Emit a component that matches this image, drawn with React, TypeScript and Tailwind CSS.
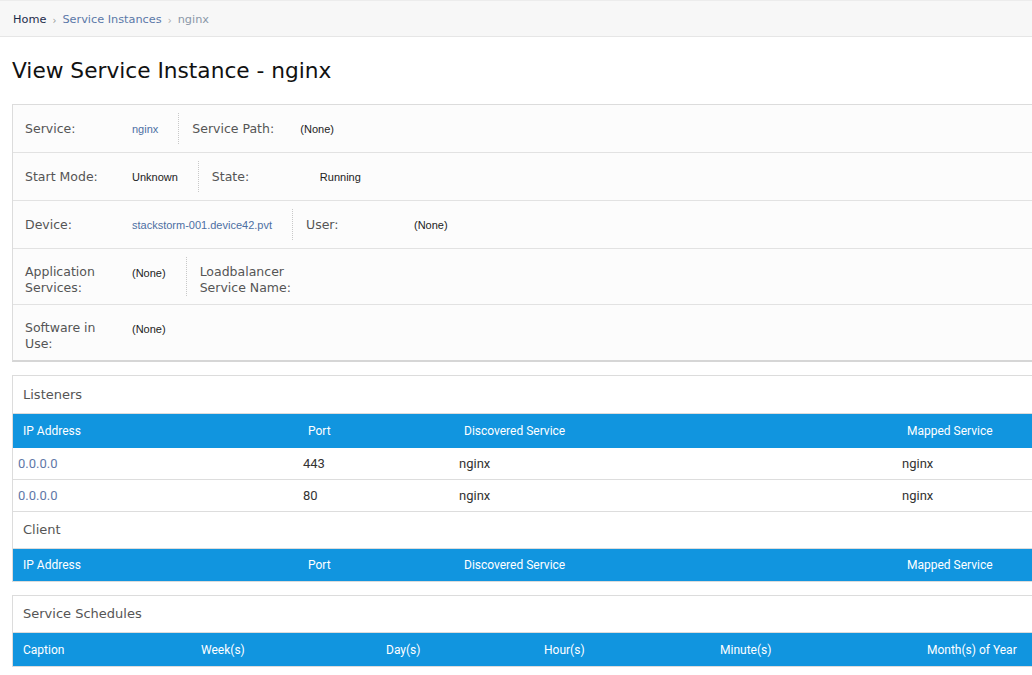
import React from 'react';

const labelFont = { fontFamily: '"DejaVu Sans", Verdana, sans-serif' };

type Field = { label: string; value?: string; link?: boolean };

function DetailRow({ fields, last }: { fields: Field[]; last?: boolean }) {
  return (
    <div
      className={`flex items-stretch px-3 py-2 ${last ? '' : 'border-b border-[#e2e2e2]'}`}
    >
      {fields.map((f, i) => (
        <div key={f.label} className="flex min-h-[31px]">
          <div
            className={`text-[12.5px] leading-4 text-[#555] ${
              f.label.includes('<br/>') ? 'pt-[7px]' : 'pt-[8px]'
            } ${i === 0 ? 'w-[107px]' : 'w-[121px] pl-[13px]'}`}
            style={labelFont}
            dangerouslySetInnerHTML={{ __html: f.label }}
          />
          <div
            className={`text-[11px] leading-4 pt-[8px] ${
              f.link ? 'text-[#4d6fa3]' : 'text-[#222]'
            } ${
              i === 0 && fields.length > 1
                ? 'pr-5 border-r border-dotted border-[#c8c8c8]'
                : ''
            }`}
            style={{ fontFamily: '"Liberation Sans", Arial, sans-serif' }}
          >
            {f.value}
          </div>
        </div>
      ))}
    </div>
  );
}

function THead({ cols, h }: { cols: { name: string; w: string }[]; h: string }) {
  return (
    <div
      className={`flex bg-[#1195df] text-white text-[12px] ${h}`}
      style={{ fontFamily: 'Roboto, sans-serif' }}
    >
      {cols.map((c) => (
        <div key={c.name} className={`${c.w} shrink-0 pl-[10px] flex items-center`}>
          {c.name}
        </div>
      ))}
    </div>
  );
}

function PanelTitle({ children, h }: { children: React.ReactNode; h: string }) {
  return (
    <div
      className={`${h} flex items-center pl-[10px] text-[13px] text-[#555] border-b border-[#dcdcdc]`}
      style={labelFont}
    >
      {children}
    </div>
  );
}

const listenerCols = [
  { name: 'IP Address', w: 'w-[285px]' },
  { name: 'Port', w: 'w-[156px]' },
  { name: 'Discovered Service', w: 'w-[443px]' },
  { name: 'Mapped Service', w: 'w-[200px]' },
];

const listeners = [
  { ip: '0.0.0.0', port: '443', disc: 'nginx', mapped: 'nginx' },
  { ip: '0.0.0.0', port: '80', disc: 'nginx', mapped: 'nginx' },
];

const scheduleCols = [
  { name: 'Caption', w: 'w-[178px]' },
  { name: 'Week(s)', w: 'w-[185px]' },
  { name: 'Day(s)', w: 'w-[158px]' },
  { name: 'Hour(s)', w: 'w-[176px]' },
  { name: 'Minute(s)', w: 'w-[207px]' },
  { name: 'Month(s) of Year', w: 'w-[200px]' },
];

export default function App() {
  return (
    <div className="w-full h-[675px] overflow-hidden bg-white">
      <div className="w-[1110px]">
        <div
          className="h-[37px] bg-[#f7f7f7] border-t border-[#ececec] border-b border-b-[#e6e6e6] flex items-center pl-[13px] pt-[3px] text-[11.3px]"
          style={labelFont}
        >
          <span className="text-[#1c2b4a]">Home</span>
          <span className="text-[#999] text-[10px] mx-[6px]">›</span>
          <span className="text-[#5b78a8]">Service Instances</span>
          <span className="text-[#aaa] text-[10px] mx-[6px]">›</span>
          <span className="text-[#8b97a8]">nginx</span>
        </div>

        <div className="px-3">
          <h1
            className="text-[21.7px] leading-7 text-[#111] mt-5 mb-[19px]"
            style={labelFont}
          >
            View Service Instance - nginx
          </h1>

          <div className="border border-[#dcdcdc] border-b-2 border-b-[#d6d6d6] bg-[#fcfcfc]">
            <DetailRow
              fields={[
                { label: 'Service:', value: 'nginx', link: true },
                { label: 'Service Path:', value: '(None)' },
              ]}
            />
            <DetailRow
              fields={[
                { label: 'Start Mode:', value: 'Unknown' },
                { label: 'State:', value: 'Running' },
              ]}
            />
            <DetailRow
              fields={[
                { label: 'Device:', value: 'stackstorm-001.device42.pvt', link: true },
                { label: 'User:', value: '(None)' },
              ]}
            />
            <DetailRow
              fields={[
                { label: 'Application<br/>Services:', value: '(None)' },
                { label: 'Loadbalancer<br/>Service Name:', value: '' },
              ]}
            />
            <DetailRow
              last
              fields={[{ label: 'Software in<br/>Use:', value: '(None)' }]}
            />
          </div>

          <div className="mt-[13px] border border-[#dcdcdc]">
            <PanelTitle h="h-[38px]">Listeners</PanelTitle>
            <THead cols={listenerCols} h="h-[34px]" />
            {listeners.map((l, i) => (
              <div
                key={i}
                className="flex h-[32px] items-center border-b border-[#dddddd] text-[13px] text-[#333]"
                style={{ fontFamily: 'Roboto, sans-serif' }}
              >
                <div className="w-[285px] shrink-0 pl-[5px] text-[#5f78a8]">{l.ip}</div>
                <div className="w-[156px] shrink-0 pl-[5px]">{l.port}</div>
                <div className="w-[443px] shrink-0 pl-[5px]">{l.disc}</div>
                <div className="w-[200px] shrink-0 pl-[5px]">{l.mapped}</div>
              </div>
            ))}
            <PanelTitle h="h-[37px]">Client</PanelTitle>
            <THead cols={listenerCols} h="h-[32px]" />
          </div>

          <div className="mt-[13px] border border-[#dcdcdc]">
            <PanelTitle h="h-[37px]">Service Schedules</PanelTitle>
            <THead cols={scheduleCols} h="h-[33px]" />
          </div>
        </div>
      </div>
    </div>
  );
}
